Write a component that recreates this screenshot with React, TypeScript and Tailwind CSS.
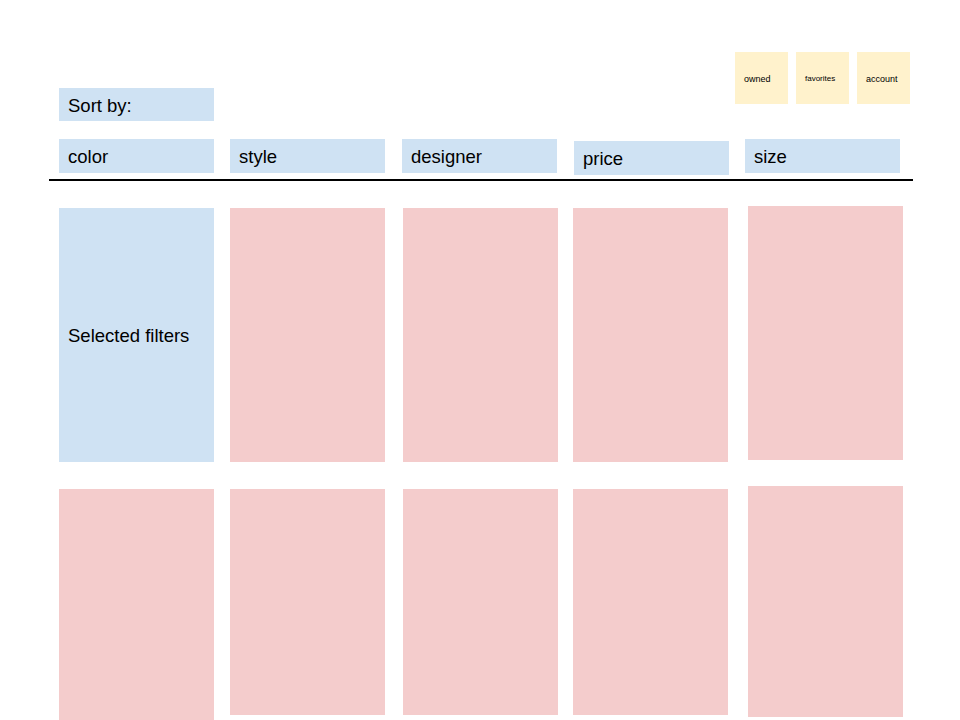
const FILTERS = [
  { label: "color", cls: "ml-0 mt-0" },
  { label: "style", cls: "ml-[16px] mt-0" },
  { label: "designer", cls: "ml-[17px] mt-0" },
  { label: "price", cls: "ml-[17px] mt-[2px]" },
  { label: "size", cls: "ml-[16px] mt-0" },
];

const ROW_ONE = [
  { text: "Selected filters", cls: "bg-[#cfe2f3] ml-0 mt-0 h-[254px]" },
  { text: "", cls: "bg-[#f4cccc] ml-[16px] mt-0 h-[254px]" },
  { text: "", cls: "bg-[#f4cccc] ml-[18px] mt-0 h-[254px]" },
  { text: "", cls: "bg-[#f4cccc] ml-[15px] mt-0 h-[254px]" },
  { text: "", cls: "bg-[#f4cccc] ml-[20px] mt-[-2px] h-[254px]" },
];

const ROW_TWO = [
  { cls: "ml-0 mt-0 h-[240px]" },
  { cls: "ml-[16px] mt-0 h-[226px]" },
  { cls: "ml-[18px] mt-0 h-[226px]" },
  { cls: "ml-[15px] mt-0 h-[226px]" },
  { cls: "ml-[20px] mt-[-3px] h-[231px]" },
];

export default function App() {
  return (
    <div className="w-[960px] h-[720px] overflow-hidden bg-white text-black font-['Liberation_Sans',Arial,sans-serif]">
      <div className="flex justify-between pl-[59px] pr-[50px] pt-[52px]">
        <div className="mt-[36px] w-[155px] h-[33px] bg-[#cfe2f3] pl-[9px] pt-[2px] flex items-center text-[18.5px]">
          Sort by:
        </div>
        <div className="flex items-start">
          <div className="w-[53px] h-[52px] bg-[#fff2cc] flex items-center pl-[9px] pt-[4px] text-[9px]">
            owned
          </div>
          <div className="ml-[8px] w-[53px] h-[52px] bg-[#fff2cc] flex items-center pl-[9px] pt-[2px] text-[8px]">
            favorites
          </div>
          <div className="ml-[8px] w-[53px] h-[52px] bg-[#fff2cc] flex items-center pl-[9px] pt-[4px] text-[9px]">
            account
          </div>
        </div>
      </div>

      <div className="flex items-start pl-[59px] mt-[18px] h-[34px]">
        {FILTERS.map((f) => (
          <div
            key={f.label}
            className={`w-[155px] h-[34px] bg-[#cfe2f3] pl-[9px] pt-[2px] flex items-center text-[18.5px] ${f.cls}`}
          >
            {f.label}
          </div>
        ))}
      </div>

      <div className="ml-[49px] mt-[6px] w-[864px] h-[1.5px] bg-black" />

      <div className="flex items-start pl-[59px] mt-[27px]">
        {ROW_ONE.map((c, i) => (
          <div
            key={i}
            className={`w-[155px] pl-[9px] pt-[2px] flex items-center text-[18.5px] ${c.cls}`}
          >
            {c.text}
          </div>
        ))}
      </div>

      <div className="flex items-start pl-[59px] mt-[27px]">
        {ROW_TWO.map((c, i) => (
          <div key={i} className={`w-[155px] bg-[#f4cccc] ${c.cls}`} />
        ))}
      </div>
    </div>
  );
}
